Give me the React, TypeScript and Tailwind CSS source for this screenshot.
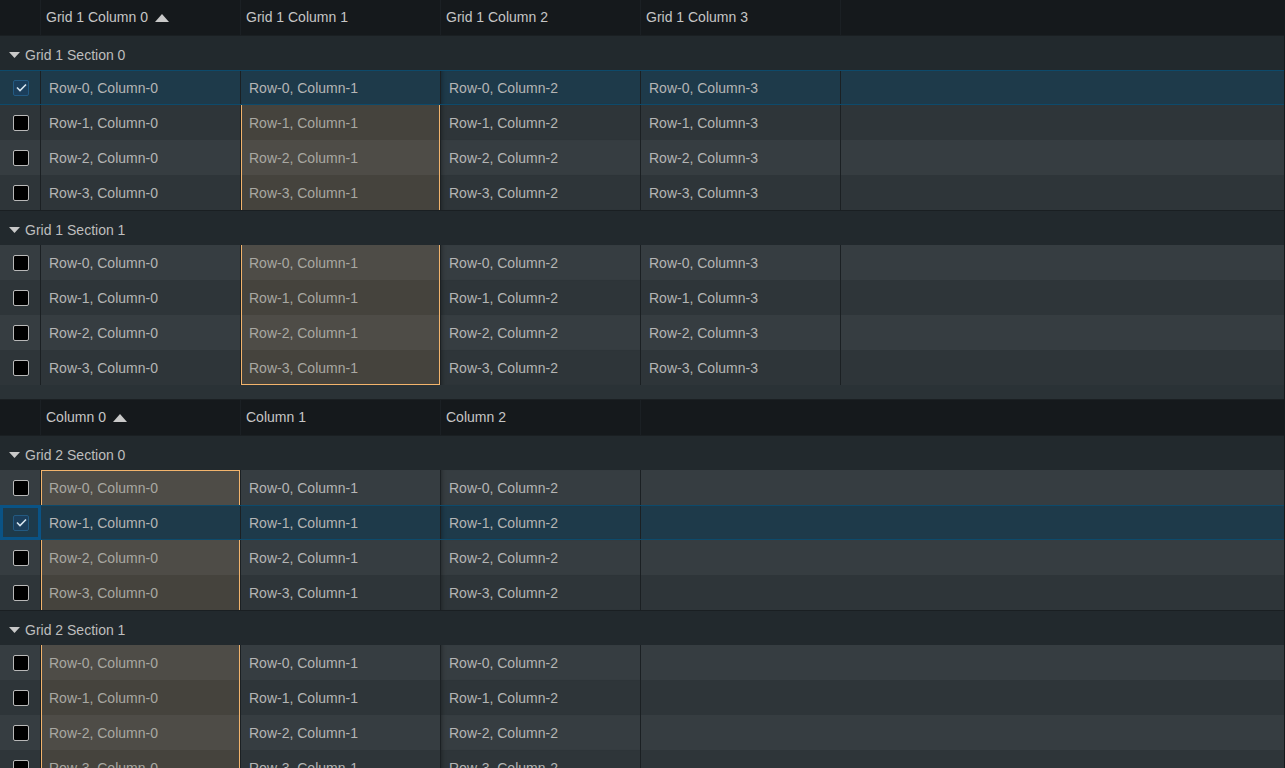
import React from "react";

type GridDef = {
  name: string;
  columns: string[];
  sections: number;
  // column index that holds the highlighted range
  rangeCol: number;
  selected: { section: number; row: number };
  focusCheckbox?: boolean;
  rangeTop: { section: number; row: number } | null;
  rangeBottom: { section: number; row: number } | null;
};

const ROWS = [0, 1, 2, 3];

function SortArrow() {
  return (
    <svg width="14" height="8" viewBox="0 0 14 8" className="ml-[7px]">
      <path d="M0 8 L7 0 L14 8 Z" fill="#c9c9c9" />
    </svg>
  );
}

function Caret() {
  return (
    <svg width="11" height="6" viewBox="0 0 11 6" className="mr-[5px]">
      <path d="M0 0 L11 0 L5.5 6 Z" fill="#c9c9c9" />
    </svg>
  );
}

function Checkbox({ checked }: { checked: boolean }) {
  if (checked) {
    return (
      <div className="w-[16px] h-[16px] rounded-[2px] bg-[#1b3e5b] border border-[#235a82] flex items-center justify-center">
        <svg width="11" height="9" viewBox="0 0 11 9">
          <path d="M1 4.5 L4 7.5 L10 1.5" stroke="#d6e4ee" strokeWidth="1.6" fill="none" />
        </svg>
      </div>
    );
  }
  return <div className="w-[16px] h-[16px] rounded-[2px] bg-black border border-[#b9b9b9]" />;
}

function HeaderRow({ columns }: { columns: string[] }) {
  return (
    <div className="flex h-[35px] bg-[#15191c] text-[#c6c6c6] text-[14px]">
      <div className="w-[41px] border-r border-[#1b2024]" />
      {columns.map((c, i) => (
        <div key={c} className="w-[200px] border-r border-[#1b2024] flex items-center pl-[5px]">
          {c}
          {i === 0 && <SortArrow />}
        </div>
      ))}
      <div className="flex-1" />
    </div>
  );
}

function SectionHeader({ label }: { label: string }) {
  return (
    <div className="h-[35px] bg-[#22292d] border-t border-[#1a1f22] flex items-center pl-[9px] pt-[4px] text-[14px] text-[#bebebe]">
      <Caret />
      {label}
    </div>
  );
}

function Grid({ g }: { g: GridDef }) {
  const inRange = (s: number, r: number) => {
    if (!g.rangeTop) return false;
    const idx = s * 4 + r;
    const top = g.rangeTop.section * 4 + g.rangeTop.row;
    const bottom = g.rangeBottom ? g.rangeBottom.section * 4 + g.rangeBottom.row : 999;
    return idx >= top && idx <= bottom;
  };

  return (
    <div>
      <HeaderRow columns={g.columns} />
      {Array.from({ length: g.sections }).map((_, s) => (
        <div key={s}>
          <SectionHeader label={`${g.name} Section ${s}`} />
          {ROWS.map((r) => {
            const sel = g.selected.section === s && g.selected.row === r;
            const even = r % 2 === 0;
            const rowBg = sel ? "bg-[#1e3a4a]" : even ? "bg-[#363d41]" : "bg-[#2e3539]";
            const isTop = g.rangeTop && g.rangeTop.section === s && g.rangeTop.row === r;
            const isBottom = g.rangeBottom && g.rangeBottom.section === s && g.rangeBottom.row === r;
            const focus = sel && g.focusCheckbox;
            return (
              <div
                key={r}
                className={
                  "flex h-[35px] text-[14px] " +
                  rowBg +
                  (sel ? " border-y border-[#0d4a6b]" : "")
                }
              >
                <div
                  className={
                    focus
                      ? "w-[41px] -my-px border-[3px] border-[#0a5385] bg-[#1e3a4a] flex items-center justify-center pl-px"
                      : "w-[41px] border-r border-[#1b2023] flex items-center justify-center pl-[2px]"
                  }
                >
                  <Checkbox checked={sel} />
                </div>
                {g.columns.map((_, c) => {
                  const highlighted = !sel && c === g.rangeCol && inRange(s, r);
                  let cls = "w-[200px] border-r border-[#1b2023] flex items-center pl-[8px] pt-[2px] ";
                  if (highlighted) {
                    cls += even ? "bg-[#4e4c47] text-[#a9a8a2] " : "bg-[#45433d] text-[#a9a8a2] ";
                    if (isTop) cls += "shadow-[inset_1px_0_0_#f3b46c,inset_-1px_0_0_#f3b46c,inset_0_1px_0_#f3b46c] ";
                    else if (isBottom) cls += "shadow-[inset_1px_0_0_#f3b46c,inset_-1px_0_0_#f3b46c,inset_0_-1px_0_#f3b46c] ";
                    else cls += "shadow-[inset_1px_0_0_#f3b46c,inset_-1px_0_0_#f3b46c] ";
                  } else {
                    cls += "text-[#b5b5b5] ";
                    if (c === 2) cls += "shadow-[inset_5px_0_5px_-5px_rgba(0,0,0,0.45)] ";
                  }
                  return (
                    <div key={c} className={cls}>
                      {`Row-${r}, Column-${c}`}
                    </div>
                  );
                })}
                <div className="flex-1" />
              </div>
            );
          })}
        </div>
      ))}
    </div>
  );
}

const grid1: GridDef = {
  name: "Grid 1",
  columns: ["Grid 1 Column 0", "Grid 1 Column 1", "Grid 1 Column 2", "Grid 1 Column 3"],
  sections: 2,
  rangeCol: 1,
  selected: { section: 0, row: 0 },
  rangeTop: { section: 0, row: 0 },
  rangeBottom: { section: 1, row: 3 },
};

const grid2: GridDef = {
  name: "Grid 2",
  columns: ["Column 0", "Column 1", "Column 2"],
  sections: 2,
  rangeCol: 0,
  selected: { section: 0, row: 1 },
  focusCheckbox: true,
  rangeTop: { section: 0, row: 0 },
  rangeBottom: null,
};

export default function App() {
  return (
    <div
      className="w-[1285px] h-[768px] overflow-hidden bg-[#22292d] border-r border-[#15191c]"
      style={{ fontFamily: '"Liberation Sans", Arial, sans-serif' }}
    >
      <Grid g={grid1} />
      <div className="h-[15px] bg-[#2a3236] border-b border-[#1b2023]" />
      <Grid g={grid2} />
    </div>
  );
}
